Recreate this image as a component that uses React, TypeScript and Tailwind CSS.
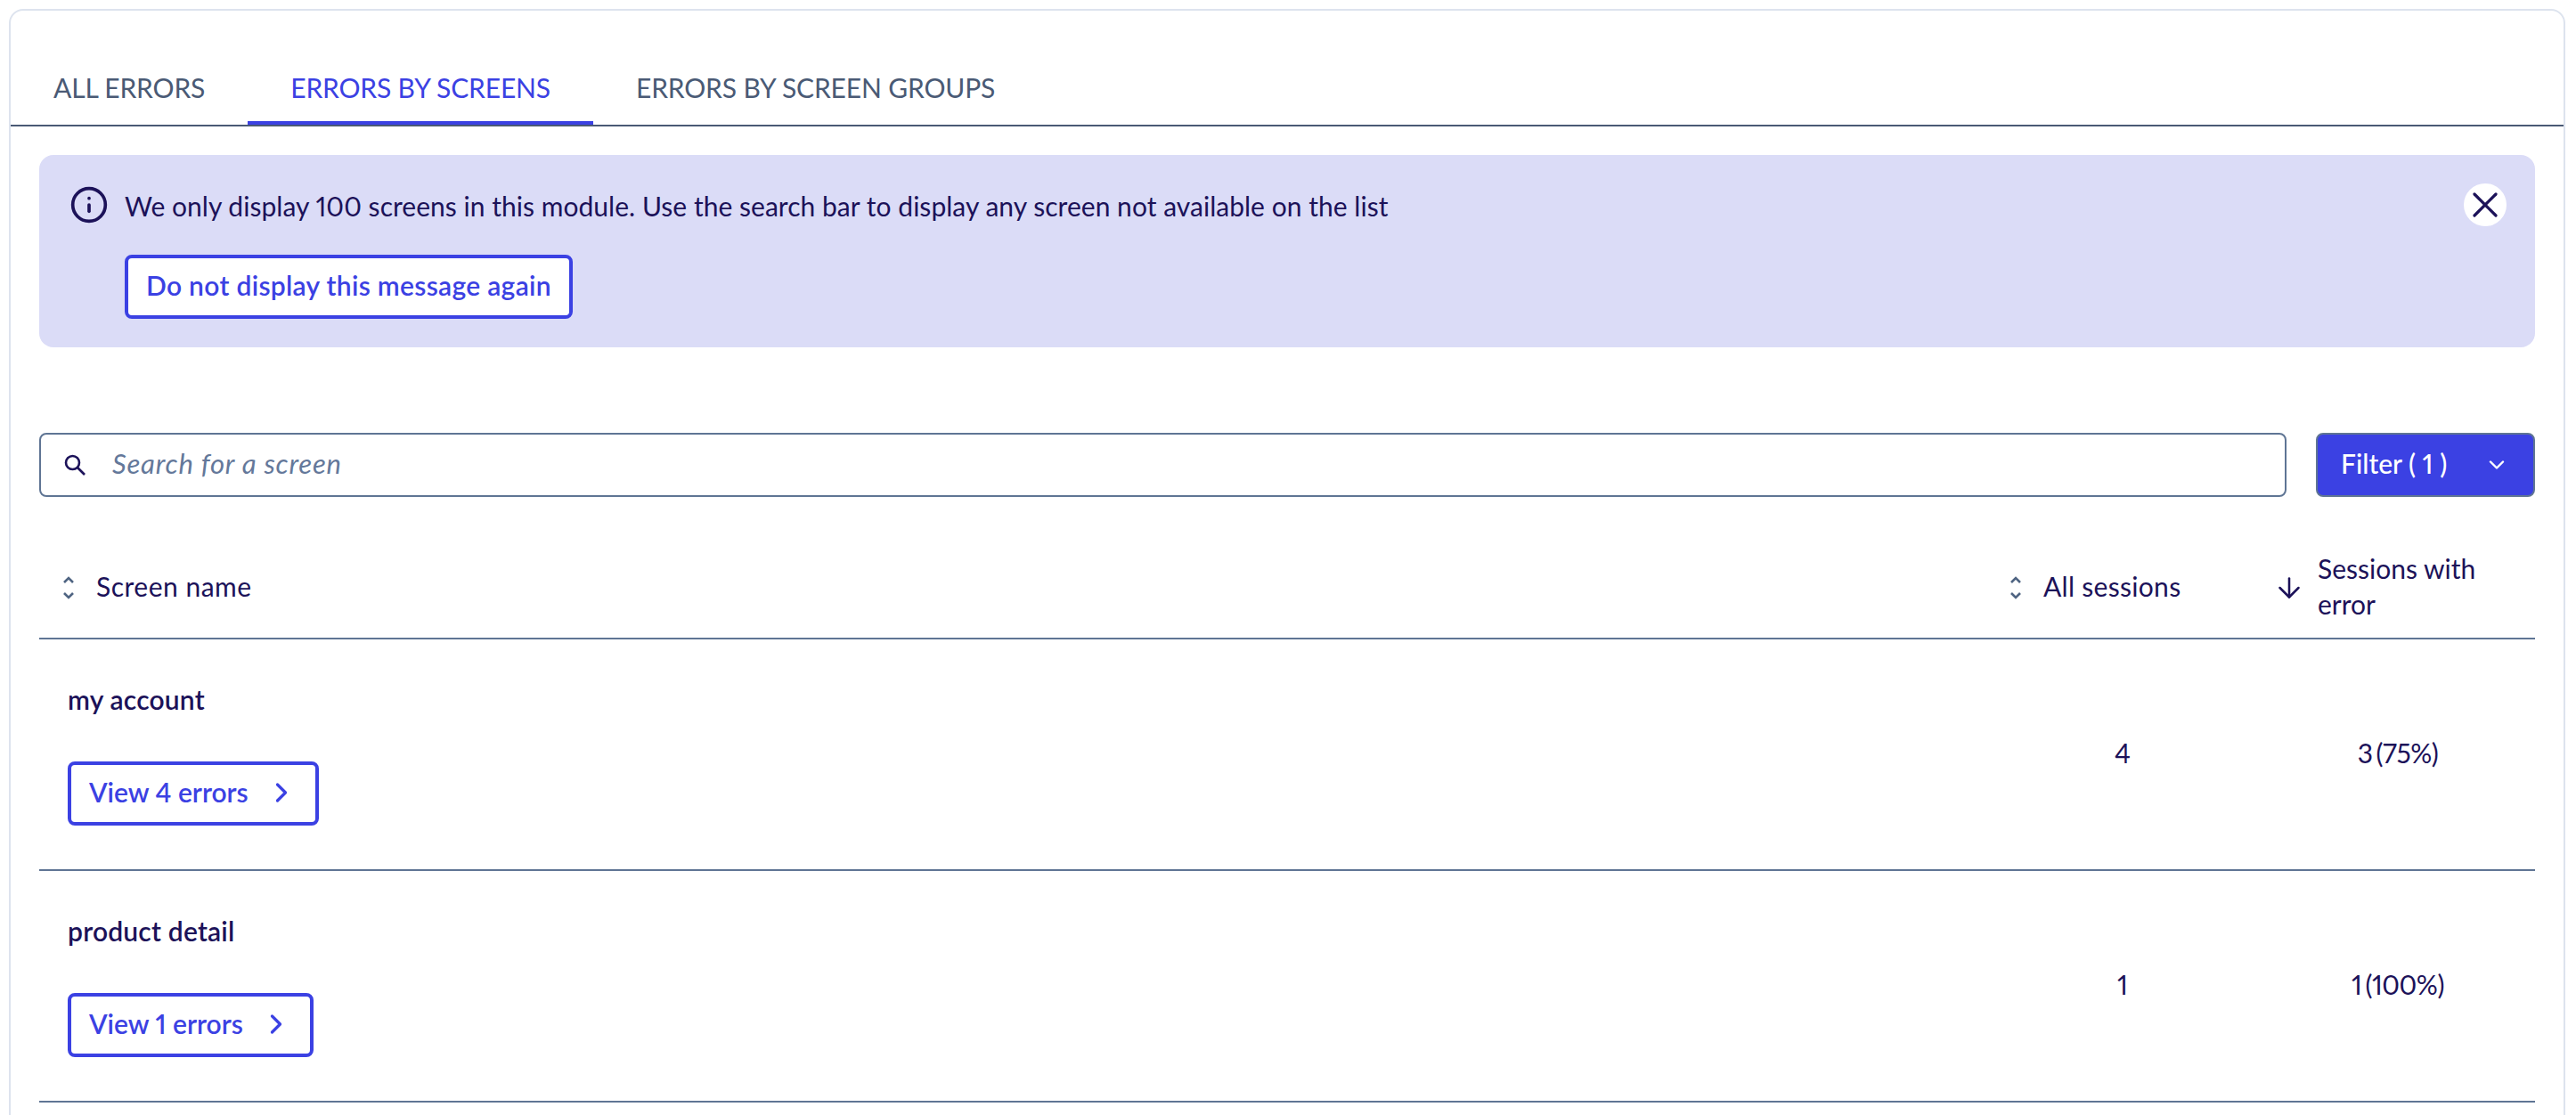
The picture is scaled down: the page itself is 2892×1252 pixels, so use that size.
import { ArrowDown, ChevronDown, ChevronRight, Info, X } from "lucide-react";

const SortIcon = () => (
  <svg width="14" height="26" viewBox="0 0 14 26" fill="none" stroke="#4f6482" strokeWidth="2.6">
    <path d="M2 7l5-5 5 5" />
    <path d="M2 19l5 5 5-5" />
  </svg>
);

const SearchIcon = () => (
  <svg width="24" height="24" viewBox="0 0 24 24" fill="none" stroke="#1c1259" strokeWidth="2.6">
    <circle cx="9.5" cy="9.5" r="7.5" />
    <path d="M15 15l8 8" />
  </svg>
);

interface ScreenRowProps {
  name: string;
  errors: number;
  sessions: number;
  withError: number;
  percent: string;
}

const ScreenRow = ({ name, errors, sessions, withError, percent }: ScreenRowProps) => (
  <div className="flex items-center h-[260px] border-b-2 border-[#5f7594] text-[#1c1259]">
    <div className="flex-1 pl-[32px] flex flex-col items-start">
      <div className="font-semibold leading-[36px] tracking-[0.2px]">{name}</div>
      <button className="mt-[52px] h-[72px] pl-[20px] pr-[20px] pb-[2px] flex items-center gap-[19px] border-4 border-[#3b41e3] rounded-lg text-[#3b41e3] font-semibold">
        <span className="pb-[2px]">View {errors} errors</span>
        <ChevronRight className="w-[36px] h-[36px]" strokeWidth={2.2} />
      </button>
    </div>
    <div className="w-[310px] text-center pb-[3px]">{sessions}</div>
    <div className="w-[308px] text-center pb-[3px] tracking-[-0.5px]">
      {withError}
      <span className="ml-[4px]">({percent})</span>
    </div>
  </div>
);

export default function App() {
  return (
    <div className="h-[1252px] overflow-hidden bg-white pl-[10px] pr-[12px] pt-[10px] text-[30px] proportional-nums font-['Lato',sans-serif]">
      <div className="h-[1300px] border-2 border-[#dde3ee] rounded-2xl">
        <div className="flex pt-[48px] border-b-2 border-[#4a5a75] text-[#4a5a75] tracking-[-0.15px]">
          <div className="h-[80px] px-[48px] flex items-center border-b-4 border-transparent">ALL ERRORS</div>
          <div className="h-[80px] px-[48px] flex items-center border-b-4 border-[#3b41e3] text-[#3b41e3]">ERRORS BY SCREENS</div>
          <div className="h-[80px] px-[48px] flex items-center border-b-4 border-transparent">ERRORS BY SCREEN GROUPS</div>
        </div>

        <div className="px-[32px] pt-[32px]">
          <div className="relative h-[216px] bg-[#dbdcf7] rounded-2xl pl-[34px] pt-[36px] text-[#1c1259]">
            <div className="flex items-center gap-[18px] h-[40px]">
              <Info className="w-[44px] h-[44px]" strokeWidth={2} />
              <span className="pt-[2px] tracking-[0.03px]">
                We only display 100 screens in this module. Use the search bar to display any screen not available on the list
              </span>
            </div>
            <button className="mt-[36px] ml-[62px] h-[72px] px-[20px] pb-[4px] bg-white border-4 border-[#3b41e3] rounded-lg text-[#3b41e3] font-semibold tracking-[0.3px]">
              Do not display this message again
            </button>
            <button className="absolute right-[32px] top-[32px] w-[48px] h-[48px] rounded-full bg-white flex items-center justify-center">
              <X className="w-[48px] h-[48px]" strokeWidth={1.6} />
            </button>
          </div>

          <div className="flex gap-[33px] mt-[96px]">
            <div className="flex-1 h-[72px] flex items-center gap-[30px] pl-[26px] border-2 border-[#5f7594] rounded-lg">
              <SearchIcon />
              <span className="pb-[4px] italic text-[#64789a] text-[31px] tracking-[0.8px]">Search for a screen</span>
            </div>
            <button className="w-[246px] h-[72px] flex items-center justify-between pl-[26px] pr-[27px] bg-[#3b41e3] border-2 border-[#5f7594] rounded-lg text-white font-medium">
              <span className="pb-[4px]">Filter ( 1 )</span>
              <ChevronDown className="w-[28px] h-[28px]" strokeWidth={2.1} />
            </button>
          </div>

          <div className="flex items-center pt-[60px] pb-[14px] border-b-2 border-[#5f7594] text-[#1c1259]">
            <div className="flex-1 flex items-center gap-[24px] pl-[26px] h-[80px]">
              <SortIcon />
              <span className="pb-[4px] tracking-[0.5px]">Screen name</span>
            </div>
            <div className="w-[310px] flex items-center gap-[24px] pl-[28px]">
              <SortIcon />
              <span className="pb-[4px] tracking-[0.3px]">All sessions</span>
            </div>
            <div className="w-[308px] flex items-center gap-[14px] pl-[14px]">
              <ArrowDown className="w-[36px] h-[36px] shrink-0" strokeWidth={1.7} />
              <span className="pb-[4px] leading-[40px] w-[220px]">Sessions with error</span>
            </div>
          </div>

          <ScreenRow name="my account" errors={4} sessions={4} withError={3} percent="75%" />
          <ScreenRow name="product detail" errors={1} sessions={1} withError={1} percent="100%" />
        </div>
      </div>
    </div>
  );
}
